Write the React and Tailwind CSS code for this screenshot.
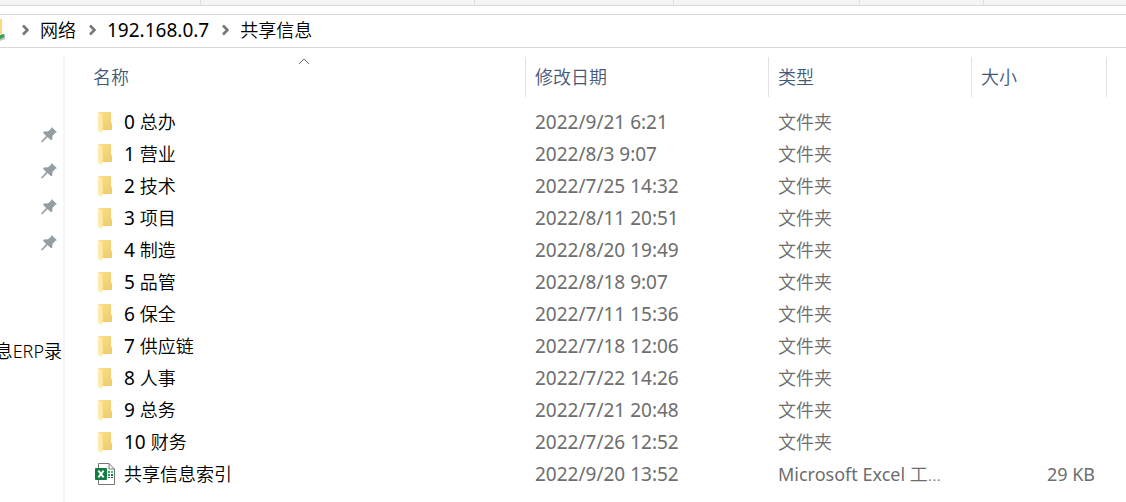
import React from "react";

const folders = [
  ["0", "总办", "2022/9/21 6:21"],
  ["1", "营业", "2022/8/3 9:07"],
  ["2", "技术", "2022/7/25 14:32"],
  ["3", "项目", "2022/8/11 20:51"],
  ["4", "制造", "2022/8/20 19:49"],
  ["5", "品管", "2022/8/18 9:07"],
  ["6", "保全", "2022/7/11 15:36"],
  ["7", "供应链", "2022/7/18 12:06"],
  ["8", "人事", "2022/7/22 14:26"],
  ["9", "总务", "2022/7/21 20:48"],
  ["10", "财务", "2022/7/26 12:52"],
];

function FolderIcon() {
  return (
    <svg className="h-6 w-5 shrink-0" viewBox="0 0 20 24" aria-hidden="true">
      <defs>
        <linearGradient id="folderBack" x1="0" x2="1" y1="0" y2="1">
          <stop offset="0" stopColor="#fbdf8c" />
          <stop offset="1" stopColor="#eccb6a" />
        </linearGradient>
      </defs>
      <path d="M3 2H16V12.5L17 13.5V20H3Z" fill="url(#folderBack)" />
      <path d="M3 2L7.5 4.5V23L3 20.5Z" fill="#ffe9a6" />
    </svg>
  );
}

function ExcelIcon() {
  return (
    <svg className="h-6 w-5 shrink-0" viewBox="0 0 20 24" aria-hidden="true">
      <path d="M3.5 1.5H14L19.5 7V22.5H3.5Z" fill="#fff" stroke="#797774" />
      <path d="M14 1.5V7H19.5" fill="none" stroke="#797774" />
      <path d="M13 9h2v2h-2zM13 12h2v2h-2z" fill="#21a366" />
      <path d="M16 9h2v2h-2z" fill="#33c481" />
      <path d="M16 12h2v2h-2z" fill="#107c41" />
      <path d="M13 15h2v1h-2zM16 15h2v1h-2z" fill="#185c37" />
      <rect y="6" width="12" height="12" rx="1" fill="#107c41" />
      <path d="M3.4 8.6L8.6 15.4M8.6 8.6L3.4 15.4" stroke="#fff" strokeWidth="1.9" />
    </svg>
  );
}

function PinIcon() {
  return (
    <svg className="h-4 w-4" viewBox="0 0 16 16" aria-hidden="true">
      <path
        d="M10.5 0L16 5.3L14.4 5.8L11.6 8.8L11.2 12.4L10 13.3L6.5 10L1.5 15.3L.3 15.6L.4 14.3L5.2 9L2 5.8L3 4.5L7.2 4.2L10 1.8Z"
        fill="#929da4"
      />
    </svg>
  );
}

function Crumb({ children }) {
  return (
    <li className="flex items-center">
      <svg className="mr-[11px] ml-3 h-3 w-2" viewBox="0 0 8 12" aria-hidden="true">
        <path d="M2 1.5L6.5 6L2 10.5" fill="none" stroke="#767676" strokeWidth="2.6" />
      </svg>
      <a href="#" className="text-black">{children}</a>
    </li>
  );
}

function Header({ children, sorted }) {
  return (
    <th
      scope="col"
      aria-sort={sorted ? "ascending" : undefined}
      className="relative h-10 border-r border-[#e2e2e2] p-0 text-left font-[350]"
    >
      {sorted && (
        <svg className="absolute top-0 left-1/2 h-2 w-3 -translate-x-1/2" viewBox="0 0 12 8" aria-hidden="true">
          <path d="M1 7L6 2L11 7" fill="none" stroke="#666" />
        </svg>
      )}
      <button type="button" className={sorted ? "px-2.5 text-[#44597a]" : "px-[9px] text-[#44597a]"}>
        {children}
      </button>
    </th>
  );
}

export default function App() {
  return (
    <div className="min-h-screen overflow-hidden bg-white font-['Noto_Sans','Noto_Sans_CJK_SC',sans-serif] text-[18px] leading-8 font-[350] text-black">
      <div className="flex h-1.5 border-b border-[#d9d9d9] bg-[#f4f5f7]">
        <div className="w-[201px] border-r border-[#dfe0e2]" />
        <div className="w-[274px] border-r border-[#dfe0e2]" />
        <div className="w-[199px] border-r border-[#dfe0e2]" />
        <div className="w-[186px] border-r border-[#dfe0e2]" />
        <div className="w-[124px] border-r border-[#dfe0e2]" />
      </div>
      <nav aria-label="地址" className="mt-2 flex h-[34px] items-center gap-px border-y border-[#d9d9d9]">
        <svg className="h-6 w-2 shrink-0" viewBox="0 0 8 24" aria-hidden="true">
          <path d="M0 0H2V15H0Z" fill="#ffd977" />
          <path d="M0 18L5 15V20L0 22Z" fill="#b9bfc0" />
          <path d="M0 16L4 15V18L0 20Z" fill="#28a745" />
        </svg>
        <ol className="flex items-center pb-0.5">
          <Crumb>网络</Crumb>
          <Crumb><span className="text-[19px] font-normal">192.168.0.7</span></Crumb>
          <Crumb>共享信息</Crumb>
        </ol>
      </nav>
      <div className="mt-[9px] flex">
        <aside className="w-[65px] shrink-0 overflow-hidden border-r-2 border-[#f5f5f5] pt-[60px]">
          <ul>
            {[0, 1, 2, 3].map((pin) => (
              <li key={pin} className="flex h-9 items-center justify-end pr-1.5">
                <PinIcon />
              </li>
            ))}
            <li className="h-9" />
            <li className="h-9" />
            <li className="flex h-9 items-center justify-end pr-px whitespace-nowrap">息ERP录</li>
          </ul>
        </aside>
        <main className="min-h-[445px] min-w-0 grow pr-[19px] pl-[18px]">
          <table className="w-full table-fixed border-separate border-spacing-0">
            <colgroup>
              <col />
              <col className="w-[243px]" />
              <col className="w-[203px]" />
              <col className="w-[135px]" />
            </colgroup>
            <thead>
              <tr>
                <Header sorted>名称</Header>
                <Header>修改日期</Header>
                <Header>类型</Header>
                <Header>大小</Header>
              </tr>
            </thead>
            <tbody className="text-[#6d6d6d] before:block before:h-[9px]">
              {folders.map(([number, name, date]) => (
                <tr key={number}>
                  <td className="p-0 pl-3">
                    <div className="flex h-8 items-center gap-[9px] text-black">
                      <FolderIcon />
                      <span><span className="text-[19px] font-normal">{number} </span>{name}</span>
                    </div>
                  </td>
                  <td className="p-0 pl-[9px] text-[19px] font-normal">{date}</td>
                  <td className="p-0 pl-[9px]">文件夹</td>
                  <td />
                </tr>
              ))}
              <tr>
                <td className="p-0 pl-3">
                  <div className="flex h-8 items-center gap-[9px] text-black">
                    <ExcelIcon />
                    <span>共享信息索引</span>
                  </div>
                </td>
                <td className="p-0 pl-[9px] text-[19px] font-normal">2022/9/20 13:52</td>
                <td className="p-0 pl-[9px]"><span className="font-normal">Microsoft Excel </span>工...</td>
                <td className="p-0 pr-3 text-right font-normal">29 KB</td>
              </tr>
            </tbody>
          </table>
        </main>
      </div>
    </div>
  );
}
